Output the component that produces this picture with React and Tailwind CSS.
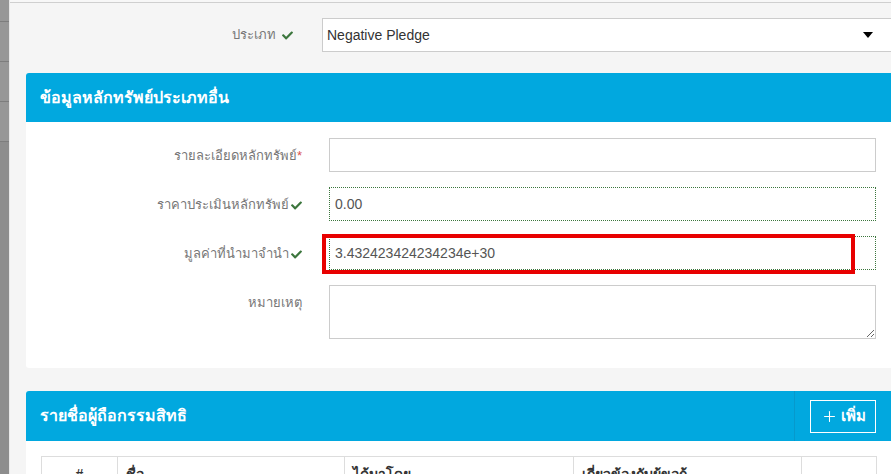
import React from 'react';
import { FaCheck } from 'react-icons/fa';
import { Plus } from 'lucide-react';

const font = { fontFamily: '"Liberation Sans", "Noto Sans", sans-serif' };

const Check = () => <FaCheck className="inline-block text-[#3c763d] ml-[2px]" size={11} />;

const Label = ({ children }) => (
  <div className="w-[288px] shrink-0 pr-[12px] pt-[8px] text-right text-[13px] text-[#777]">
    {children}
  </div>
);

const FieldRow = ({ label, children }) => (
  <div className="flex items-start">
    <Label>{label}</Label>
    <div className="ml-[15px] w-[547px] relative">{children}</div>
  </div>
);

export default function App() {
  return (
    <div className="flex h-[474px] w-[891px] overflow-hidden bg-[#f5f5f5]" style={font}>
      {/* left strip */}
      <div className="w-[9px] shrink-0 flex flex-col bg-[#8d8d8d] border-r border-[#e8e8e8] box-content">
        <div className="h-[22px] bg-[#979797] border-b border-[#7d7d7d]" />
        <div className="h-[40px] bg-[#979797] border-b border-[#7d7d7d]" />
        <div className="h-[40px] bg-[#979797] border-b border-[#7d7d7d]" />
        <div className="h-[40px] bg-[#979797] border-b border-[#7d7d7d]" />
      </div>

      <div className="flex-1 min-w-0">
        <div className="h-[2px] bg-[#f7f7f7]" />
        <div className="border-t border-[#cfcfcf] pl-[16px]">
          {/* type row */}
          <div className="flex items-center pt-[15px]">
            <div className="w-[282px] shrink-0 pr-[15px] text-right text-[13px] text-[#777]">
              ประเภท <Check />
            </div>
            <div className="ml-[14px] h-[34px] w-[600px] shrink-0 bg-white border border-[#ccc] flex items-center pl-[4px] text-[14px] text-[#333]">
              <span className="flex-1 whitespace-nowrap">Negative Pledge</span>
              <span className="mr-[48px] w-0 h-0 border-l-[5px] border-r-[5px] border-t-[6px] border-l-transparent border-r-transparent border-t-black" />
            </div>
          </div>

          {/* panel 1 */}
          <div className="mt-[21px] w-[900px] bg-white rounded-[3px] overflow-hidden">
            <div className="h-[49px] bg-[#01a8df] flex items-center px-[14px] text-white text-[16px] font-bold">
              ข้อมูลหลักทรัพย์ประเภทอื่น
            </div>
            <div className="pt-[16px] pb-[29px] flex flex-col gap-[15px]">
              <FieldRow label={<>รายละเอียดหลักทรัพย์<span className="text-[#d9534f]">*</span></>}>
                <input className="block w-full h-[34px] border border-[#ccc] bg-white px-[5px] text-[14px] text-[#555] outline-none" />
              </FieldRow>
              <FieldRow label={<>ราคาประเมินหลักทรัพย์<Check /></>}>
                <input
                  readOnly
                  value="0.00"
                  className="block w-full h-[34px] border border-dotted border-[#3c763d] bg-white px-[5px] text-[14px] text-[#555] outline-none"
                />
              </FieldRow>
              <FieldRow label={<>มูลค่าที่นำมาจำนำ<Check /></>}>
                <input
                  readOnly
                  value="3.432423424234234e+30"
                  className="block w-full h-[34px] border border-dotted border-[#3c763d] bg-white px-[5px] text-[14px] text-[#555] outline-none"
                />
                <div className="absolute left-[-7px] top-[-2px] w-[533px] h-[40px] border-[4px] border-[#e80000] pointer-events-none" />
              </FieldRow>
              <FieldRow label="หมายเหตุ">
                <textarea className="block w-full h-[54px] border border-[#ccc] bg-white px-[5px] text-[14px] text-[#555] outline-none resize-y" />
              </FieldRow>
            </div>
          </div>

          {/* panel 2 */}
          <div className="mt-[23px] w-[900px] bg-white rounded-t-[3px] overflow-hidden">
            <div className="h-[50px] bg-[#01a8df] flex items-center text-white">
              <div className="w-[768px] pl-[14px] text-[16px] font-bold">รายชื่อผู้ถือกรรมสิทธิ</div>
              <div className="h-full border-l border-[#0699cc] flex items-center pl-[15px]">
                <button className="h-[33px] w-[66px] border border-white flex items-center justify-center gap-[3px] text-[15px] font-bold">
                  <Plus size={17} strokeWidth={1.5} />
                  เพิ่ม
                </button>
              </div>
            </div>
            <div className="pt-[15px] pl-[15px]">
              <table className="border-collapse text-[14px] text-[#333]">
                <thead>
                  <tr className="h-[40px]">
                    <th className="w-[76px] border border-[#ddd] text-center font-bold align-top pt-[7px]">#</th>
                    <th className="w-[227px] border border-[#ddd] text-left font-bold px-[8px] align-top pt-[7px]">ชื่อ</th>
                    <th className="w-[229px] border border-[#ddd] text-left font-bold px-[8px] align-top pt-[7px]">ได้มาโดย</th>
                    <th className="w-[228px] border border-[#ddd] text-left font-bold px-[8px] align-top pt-[7px]">เกี่ยวข้องกับผู้ขอกู้</th>
                    <th className="w-[75px] border border-[#ddd]" />
                  </tr>
                </thead>
              </table>
            </div>
          </div>
        </div>
      </div>
    </div>
  );
}
